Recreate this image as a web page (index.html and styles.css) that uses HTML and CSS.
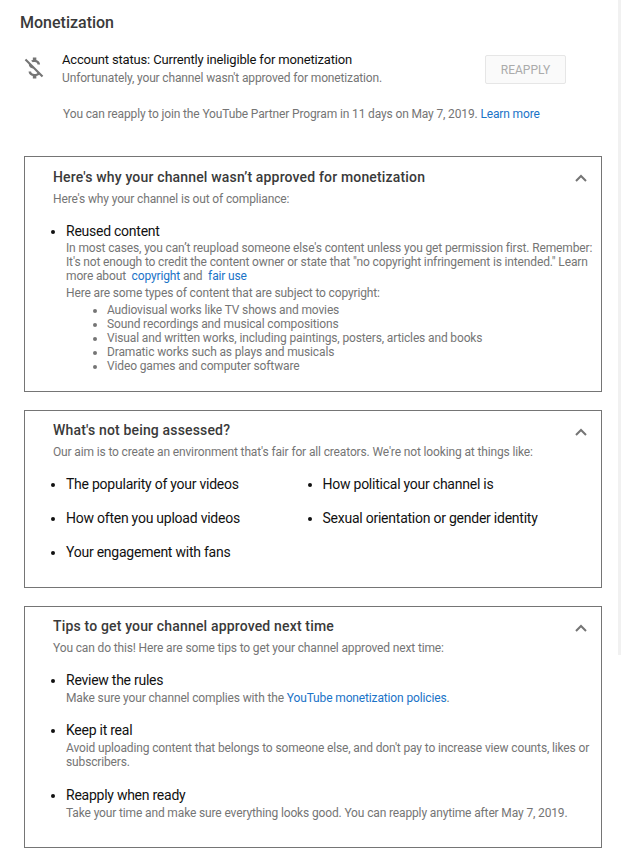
FILE: index.html
```html
<!DOCTYPE html>
<html lang="en">
<head>
<meta charset="utf-8">
<title>Monetization</title>
<link rel="stylesheet" href="styles.css">
</head>
<body>
<div class="scrollbar"></div>
<main class="page">
  <h1 class="page-title">Monetization</h1>
  <section class="status">
    <svg class="status-icon" viewBox="0 0 24 24" aria-hidden="true"><path fill="#757575" d="M12.5 6.9c1.78 0 2.44.85 2.5 2.1h2.21c-.07-1.72-1.12-3.3-3.21-3.81V3h-3v2.16c-.53.12-1.03.3-1.48.54l1.47 1.47c.41-.17.91-.27 1.51-.27zM5.33 4.06L4.06 5.33 7.5 8.77c0 2.08 1.56 3.22 3.91 3.91l3.51 3.51c-.34.49-1.05.91-2.42.91-2.06 0-2.87-.92-2.98-2.1h-2.2c.12 2.19 1.76 3.42 3.68 3.83V21h3v-2.15c.96-.18 1.82-.55 2.45-1.12l2.22 2.22 1.27-1.27L5.33 4.06z"/></svg>
    <div class="status-text">
      <div class="status-line">Account status: Currently ineligible for monetization</div>
      <div class="status-sub">Unfortunately, your channel wasn't approved for monetization.</div>
    </div>
    <button class="reapply" type="button" disabled>REAPPLY</button>
  </section>
  <p class="reapply-note">You can reapply to join the YouTube Partner Program in 11 days on May 7, 2019. <a href="#">Learn more</a></p>

  <section class="card card-why">
    <svg class="chevron" viewBox="0 0 12 8" aria-hidden="true"><path d="M1 7l5-5 5 5" fill="none" stroke="#757575" stroke-width="2"/></svg>
    <h2 class="card-title">Here's why your channel wasn’t approved for monetization</h2>
    <p class="card-intro">Here's why your channel is out of compliance:</p>
    <ul class="items">
      <li>
        <div class="item-title">Reused content</div>
        <p class="item-copy">In most cases, you can’t reupload someone else's content unless you get permission first. Remember: It's not enough to credit the content owner or state that "no copyright infringement is intended." Learn<br>more about &nbsp;<a href="#">copyright</a> and &nbsp;<a href="#">fair use</a></p>
        <p class="item-copy item-gap">Here are some types of content that are subject to copyright:</p>
        <ul class="subitems">
          <li>Audiovisual works like TV shows and movies</li>
          <li>Sound recordings and musical compositions</li>
          <li>Visual and written works, including paintings, posters, articles and books</li>
          <li>Dramatic works such as plays and musicals</li>
          <li>Video games and computer software</li>
        </ul>
      </li>
    </ul>
  </section>

  <section class="card card-assessed">
    <svg class="chevron" viewBox="0 0 12 8" aria-hidden="true"><path d="M1 7l5-5 5 5" fill="none" stroke="#757575" stroke-width="2"/></svg>
    <h2 class="card-title">What's not being assessed?</h2>
    <p class="card-intro">Our aim is to create an environment that's fair for all creators. We're not looking at things like:</p>
    <ul class="grid-items">
      <li>The popularity of your videos</li>
      <li>How political your channel is</li>
      <li>How often you upload videos</li>
      <li>Sexual orientation or gender identity</li>
      <li>Your engagement with fans</li>
    </ul>
  </section>

  <section class="card card-tips">
    <svg class="chevron" viewBox="0 0 12 8" aria-hidden="true"><path d="M1 7l5-5 5 5" fill="none" stroke="#757575" stroke-width="2"/></svg>
    <h2 class="card-title">Tips to get your channel approved next time</h2>
    <p class="card-intro">You can do this! Here are some tips to get your channel approved next time:</p>
    <ul class="items tips">
      <li>
        <div class="item-title">Review the rules</div>
        <p class="item-copy">Make sure your channel complies with the <a href="#">YouTube monetization policies</a>.</p>
      </li>
      <li>
        <div class="item-title">Keep it real</div>
        <p class="item-copy">Avoid uploading content that belongs to someone else, and don't pay to increase view counts, likes or subscribers.</p>
      </li>
      <li>
        <div class="item-title">Reapply when ready</div>
        <p class="item-copy">Take your time and make sure everything looks good. You can reapply anytime after May 7, 2019.</p>
      </li>
    </ul>
  </section>
</main>
</body>
</html>
```
FILE: styles.css
```css
html, body { margin: 0; padding: 0; height: 864px; overflow: hidden; background: #fff; }
body { font-family: Roboto, "Liberation Sans", sans-serif; font-size: 12px; line-height: 14px; letter-spacing: -.14px; color: #757575; position: relative; }
a { color: #1a73c7; text-decoration: none; }
p { margin: 0; }
.scrollbar { position: absolute; top: 0; right: 0; width: 3px; height: 655px; background: #f1f1f1; }
.page { padding: 13px 19px 0 24px; }
.page-title { margin: 0 0 0 -4px; font-size: 16px; line-height: 19px; font-weight: 500; letter-spacing: 0; color: #3a3a3a; }
.status { display: flex; align-items: flex-start; margin-top: 20px; height: 40px; }
.status-icon { width: 28px; height: 28px; margin: 2px -2px 0 -4px; flex: none; }
.status-text { margin-left: 16px; width: 423px; flex: none; }
.status-line { font-size: 13px; line-height: 16px; letter-spacing: -.17px; color: #111; }
.status-sub { font-size: 12px; line-height: 16px; margin-top: 2px; }
.reapply { width: 81px; height: 29px; margin-top: 3px; border: 1px solid #e6e6e6; border-radius: 2px; background: #fafafa; color: #ababab; font: 12px Roboto, sans-serif; padding: 0; }
.reapply-note { margin: 14px 0 0 39px; line-height: 16px; }
.card { position: relative; border: 1px solid #757575; box-sizing: border-box; width: 578px; padding: 11px 8px 0 28px; margin-top: 18px; }
.card-why { margin-top: 34px; padding-top: 12px; height: 236px; }
.card-assessed { height: 178px; }
.card-tips { height: 242px; }
.chevron { position: absolute; top: 17px; right: 14px; width: 12px; height: 8px; }
.card-title { margin: 0; font-size: 14px; line-height: 17px; font-weight: 500; letter-spacing: .165px; color: #3a3a3a; }
.card-intro { margin-top: 6px; line-height: 14px; }
.items { list-style: disc; margin: 17px 0 0; padding: 0 0 0 13px; }
.items > li::marker, .grid-items > li::marker { color: #111; font-size: 14px; }
.item-title { font-size: 14px; line-height: 17px; letter-spacing: -.25px; color: #111; }
.item-copy { line-height: 14px; margin-top: 1px; }
.item-gap { margin-top: 3px; }
.subitems { list-style: disc; margin: 3px 0 0; padding: 0 0 0 41px; color: #757575; }
.grid-items { list-style: disc; margin: 17px 0 0; padding: 0 0 0 13px; display: grid; grid-template-columns: 256.5px 1fr; row-gap: 17px; font-size: 14px; line-height: 17px; letter-spacing: -.24px; color: #111; }
.tips .item-copy { margin-top: 2px; }
.tips > li + li { margin-top: 17.4px; }
```
